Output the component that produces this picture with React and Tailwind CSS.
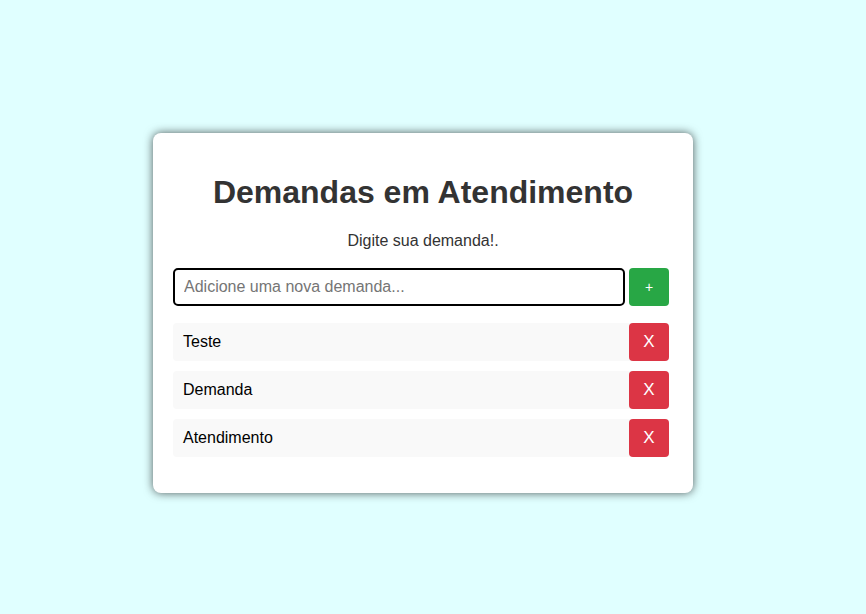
import React from "react";

export default function App() {
  const items = ["Teste", "Demanda", "Atendimento"];
  return (
    <div
      className="min-h-screen w-full bg-[#e0ffff] pt-[133px] pl-[153px]"
      style={{ fontFamily: '"Liberation Sans", Arial, sans-serif' }}
    >
      <div className="w-[540px] rounded-[8px] bg-white p-[20px] shadow-[0_0_10px_rgba(0,0,0,0.65)]">
        <h1 className="mt-[21px] mb-[21px] text-center text-[32px] leading-[37px] font-bold text-[#333]">
          Demandas em Atendimento
        </h1>
        <p className="mb-[18px] text-center text-[16px] leading-[18px] text-[#333]">
          Digite sua demanda!.
        </p>
        <div className="mr-[4px] flex gap-[4px]">
          <input
            className="h-[38px] flex-1 rounded-[5px] border-2 border-black px-[9px] text-[16px] text-black outline-none placeholder:text-[#757575]"
            placeholder="Adicione uma nova demanda..."
          />
          <button className="h-[38px] w-[40px] rounded-[4px] bg-[#28a745] text-[14px] text-white">
            +
          </button>
        </div>
        <ul className="mt-[17px] mr-[4px] mb-[16px] flex flex-col gap-[10px]">
          {items.map((t) => (
            <li
              key={t}
              className="flex h-[38px] items-center justify-between rounded-[4px] bg-[#f9f9f9] pl-[10px]"
            >
              <span className="text-[16px] text-black">{t}</span>
              <button className="h-[38px] w-[40px] rounded-[4px] bg-[#dc3545] text-[17px] text-white">
                X
              </button>
            </li>
          ))}
        </ul>
      </div>
    </div>
  );
}
